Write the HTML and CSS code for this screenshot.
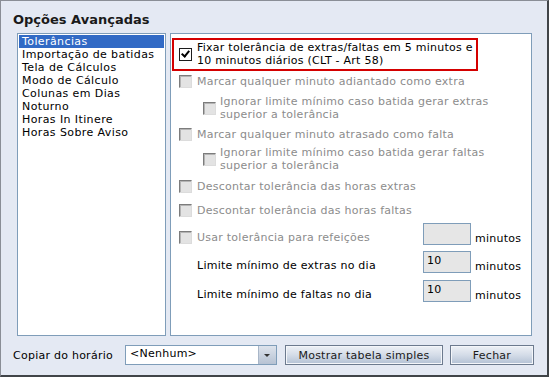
FILE: index.html
```html
<!DOCTYPE html>
<html lang="pt">
<head>
    <meta charset="UTF-8">
    <title>Opções Avançadas</title>
    <link rel="stylesheet" href="styles.css">
</head>
<body>
    <div class="window">
        <h1 class="title">Opções Avançadas</h1>

        <div class="main">
            <ul class="list">
                <li class="selected">Tolerâncias</li>
                <li>Importação de batidas</li>
                <li>Tela de Cálculos</li>
                <li>Modo de Cálculo</li>
                <li>Colunas em Dias</li>
                <li>Noturno</li>
                <li>Horas In Itinere</li>
                <li>Horas Sobre Aviso</li>
            </ul>

            <div class="panel">
                <div class="highlight">
                    <div class="option">
                        <span class="check checked"></span>
                        <span>Fixar tolerância de extras/faltas em 5 minutos e<br>10 minutos diários (CLT - Art 58)</span>
                    </div>
                </div>

                <div class="option disabled r2">
                    <span class="check"></span>
                    <span>Marcar qualquer minuto adiantado como extra</span>
                </div>
                <div class="option disabled sub r3">
                    <span class="check"></span>
                    <span>Ignorar limite mínimo caso batida gerar extras<br>superior a tolerância</span>
                </div>
                <div class="option disabled r4">
                    <span class="check"></span>
                    <span>Marcar qualquer minuto atrasado como falta</span>
                </div>
                <div class="option disabled sub r5">
                    <span class="check"></span>
                    <span>Ignorar limite mínimo caso batida gerar faltas<br>superior a tolerância</span>
                </div>
                <div class="option disabled r6">
                    <span class="check"></span>
                    <span>Descontar tolerância das horas extras</span>
                </div>
                <div class="option disabled r7">
                    <span class="check"></span>
                    <span>Descontar tolerância das horas faltas</span>
                </div>

                <div class="field r8">
                    <div class="field-label disabled">
                        <span class="check"></span>
                        <span>Usar tolerância para refeições</span>
                    </div>
                    <div class="input"></div>
                    <span class="unit">minutos</span>
                </div>
                <div class="field r9">
                    <div class="field-label plain">Limite mínimo de extras no dia</div>
                    <div class="input">10</div>
                    <span class="unit">minutos</span>
                </div>
                <div class="field r10">
                    <div class="field-label plain">Limite mínimo de faltas no dia</div>
                    <div class="input">10</div>
                    <span class="unit">minutos</span>
                </div>
            </div>
        </div>

        <div class="footer">
            <span class="footer-label">Copiar do horário</span>
            <div class="select">
                <span class="select-value">&lt;Nenhum&gt;</span>
                <span class="select-arrow"></span>
            </div>
            <button class="button wide">Mostrar tabela simples</button>
            <button class="button">Fechar</button>
        </div>
    </div>
</body>
</html>
```

FILE: styles.css
```css
body {
    margin: 0;
    font-family: 'DejaVu Sans', Verdana, sans-serif;
    font-size: 11px;
    letter-spacing: 0.25px;
    color: #000;
    background: #e4e9f3;
}

.window {
    box-sizing: border-box;
    width: 549px;
    height: 377px;
    background: #e4e9f3;
    border: 1px solid #8a8e96;
    border-right: 2px solid #404448;
    border-bottom: 2px solid #404448;
    display: flex;
    flex-direction: column;
}

.title {
    margin: 11px 0 0 12px;
    font-size: 13px;
    line-height: 16px;
    font-weight: bold;
    letter-spacing: 0;
    color: #1a1a1a;
}

.main {
    display: flex;
    gap: 4px;
    margin: 5px 0 0 16px;
    height: 303px;
}

.list {
    box-sizing: border-box;
    width: 149px;
    margin: 0;
    padding: 1px;
    list-style: none;
    background: #fff;
    border: 1px solid #7f9db9;
    letter-spacing: 0.4px;
    line-height: 13px;
}

.list li {
    padding-left: 3px;
}

.list li.selected {
    background: #316ac5;
    color: #fff;
}

.panel {
    box-sizing: border-box;
    width: 362px;
    background: #fff;
    border: 1px solid #7f9db9;
    padding: 4px 0 0 1px;
    line-height: 13px;
}

.highlight {
    width: 297px;
    border: 2px solid #d40000;
    padding: 1px 0 2px 5px;
}

.option {
    display: flex;
    align-items: center;
    gap: 5px;
}

.r2, .r4, .r6, .r7 {
    padding-left: 7px;
}

.sub {
    padding-left: 31px;
    gap: 4px;
}

.r2 { margin-top: 4px; }
.r3 { margin-top: 7px; }
.r4 { margin-top: 7px; }
.r5 { margin-top: 5px; }
.r6 { margin-top: 8px; }
.r7 { margin-top: 11px; }

.disabled {
    color: #8c8c8c;
}

.check {
    box-sizing: border-box;
    flex: none;
    width: 13px;
    height: 13px;
    background: #e3e3e3;
    border: 1px solid;
    border-color: #7c7c7c #dcdcdc #dcdcdc #7c7c7c;
    box-shadow: inset 1px 1px 0 #b4b4b4;
}

.check.checked {
    background: #fff;
    border: 1px solid #1c1c1c;
    box-shadow: none;
    position: relative;
}

.check.checked::after {
    content: '';
    position: absolute;
    left: 3px;
    top: 0px;
    width: 3px;
    height: 6px;
    border: solid #000;
    border-width: 0 2px 2px 0;
    transform: rotate(40deg);
}

.field {
    display: flex;
    align-items: flex-end;
    padding-left: 7px;
}

.r8 { margin-top: 6px; }
.r9 { margin-top: 6px; }
.r10 { margin-top: 7px; }

.field-label {
    width: 244px;
    display: flex;
    align-items: center;
    gap: 5px;
    margin-bottom: 1px;
}

.field-label.plain {
    padding-left: 18px;
    box-sizing: border-box;
}

.input {
    box-sizing: border-box;
    width: 48px;
    height: 22px;
    background: #e6e6e6;
    border: 1px solid #7f9db9;
    padding: 2px 0 0 3px;
    line-height: 13px;
}

.unit {
    margin-left: 4px;
    line-height: 13px;
}

.footer {
    display: flex;
    align-items: center;
    margin: 9px 0 0 12px;
}

.footer-label {
    width: 112px;
    padding-top: 1px;
}

.select {
    box-sizing: border-box;
    display: flex;
    width: 152px;
    height: 20px;
    background: #fff;
    border: 1px solid #7f9db9;
}

.select-value {
    flex: 1;
    padding: 1px 0 0 4px;
    line-height: 13px;
}

.select-arrow {
    width: 17px;
    background: linear-gradient(#dde3ec, #b6c2d3);
    border-left: 1px solid #a8b6c8;
    position: relative;
}

.select-arrow::after {
    content: '';
    position: absolute;
    left: 5px;
    top: 8px;
    border: 3px solid transparent;
    border-top: 3px solid #333;
    border-bottom: 0;
}

.button {
    box-sizing: border-box;
    height: 20px;
    margin-left: 8px;
    width: 158px;
    font-family: inherit;
    font-size: 11px;
    letter-spacing: 0.25px;
    color: #1a1a1a;
    background: linear-gradient(#eef1f6 0%, #d4dce8 50%, #b3c1d4 100%);
    border: 1px solid #6c7a8e;
    box-shadow: inset 0 0 0 1px #f4f6fa;
    padding: 0;
}

.button + .button {
    margin-left: 7px;
    width: 84px;
}
```
